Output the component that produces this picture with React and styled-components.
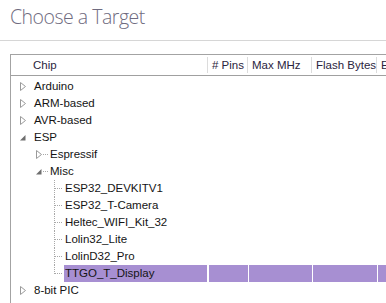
import React from 'react'
import styled, { createGlobalStyle } from 'styled-components'

const GlobalStyle = createGlobalStyle`
  html, body {
    margin: 0;
    padding: 0;
    background: #ffffff;
    overflow: hidden;
  }
`

const columns = [
  { title: 'Chip', width: '197px' },
  { title: '# Pins', width: '40px' },
  { title: 'Max MHz', width: '64px' },
  { title: 'Flash Bytes', width: '65px' },
  { title: 'EEPROM Bytes', width: '90px' },
]

const rows = [
  { name: 'Arduino', level: 0, kind: 'closed' },
  { name: 'ARM-based', level: 0, kind: 'closed' },
  { name: 'AVR-based', level: 0, kind: 'closed' },
  { name: 'ESP', level: 0, kind: 'open' },
  { name: 'Espressif', level: 1, kind: 'closed', line: true },
  { name: 'Misc', level: 1, kind: 'open', line: true },
  { name: 'ESP32_DEVKITV1', level: 2, kind: 'leaf' },
  { name: 'ESP32_T-Camera', level: 2, kind: 'leaf' },
  { name: 'Heltec_WIFI_Kit_32', level: 2, kind: 'leaf' },
  { name: 'Lolin32_Lite', level: 2, kind: 'leaf' },
  { name: 'LolinD32_Pro', level: 2, kind: 'leaf' },
  { name: 'TTGO_T_Display', level: 2, kind: 'leaf', last: true, selected: true },
  { name: '8-bit PIC', level: 0, kind: 'closed' },
  { name: '16-bit PIC', level: 0, kind: 'closed' },
]

const gridCols = columns.map(c => c.width).join(' ')

export default function App() {
  return (
    <Page>
      <GlobalStyle />
      <Title>Choose a Target</Title>
      <Divider />
      <Table>
        <HeaderRow>
          {columns.map((c, i) => (
            <HeaderCell key={c.title} $first={i === 0}>{c.title}</HeaderCell>
          ))}
        </HeaderRow>
        <Body>
          {rows.map(r => (
            <Row key={r.name}>
              <ChipCell>
                <Indent $level={r.level} />
                {r.kind === 'leaf' ? (
                  <LeafLine $last={r.last} />
                ) : (
                  <Toggle>
                    {r.kind === 'open' ? <OpenArrow /> : <ClosedArrow />}
                    {r.line && <Dash />}
                  </Toggle>
                )}
                <Label $selected={r.selected} $leaf={r.kind === 'leaf'}>{r.name}</Label>
              </ChipCell>
              {columns.slice(1).map(c => (
                <DataCell key={c.title} $selected={r.selected} />
              ))}
            </Row>
          ))}
        </Body>
      </Table>
    </Page>
  )
}

function ClosedArrow() {
  return (
    <svg width="6" height="9" viewBox="0 0 6 9">
      <path d="M0.5 0.5 L5.5 4.5 L0.5 8.5 Z" fill="none" stroke="#9a9a9a" strokeWidth="1" />
    </svg>
  )
}

function OpenArrow() {
  return (
    <svg width="6" height="9" viewBox="0 0 6 9">
      <path d="M5.5 2 L5.5 7.5 L0 7.5 Z" fill="#6e6e6e" />
    </svg>
  )
}

const Page = styled.div`
  width: 386px;
  height: 303px;
  overflow: hidden;
  font-family: 'Liberation Sans', Arial, sans-serif;
`

const Title = styled.div`
  height: 40px;
  padding-left: 10px;
  box-sizing: border-box;
  padding-top: 3px;
  font-family: 'Open Sans', 'Liberation Sans', sans-serif;
  font-weight: 300;
  font-size: 19.5px;
  letter-spacing: -0.5px;
  color: #6f6b80;
`

const Divider = styled.div`
  height: 1px;
  background: #d6d6d6;
  margin-bottom: 13px;
`

const Table = styled.div`
  margin-left: 10px;
  border-top: 1px solid #a3a3a3;
  border-left: 1px solid #a3a3a3;
  width: 480px;
`

const HeaderRow = styled.div`
  display: grid;
  grid-template-columns: ${gridCols};
  height: 20px;
  border-bottom: 1px solid #a0a0a0;
  align-items: center;
`

const HeaderCell = styled.div`
  font-size: 11.5px;
  color: #2b2540;
  padding-left: ${p => (p.$first ? '22px' : '4px')};
  border-right: 1px solid #dcdcdc;
  height: 16px;
  line-height: 16px;
  white-space: nowrap;
  overflow: hidden;
`

const Body = styled.div`
  padding-top: 2px;
`

const Row = styled.div`
  display: grid;
  grid-template-columns: ${gridCols};
  height: 17px;
`

const ChipCell = styled.div`
  display: flex;
  align-items: stretch;
  border-right: 1px solid transparent;
`

const Indent = styled.div`
  width: ${p => 5 + p.$level * 16}px;
  flex: none;
`

const Toggle = styled.div`
  width: 17px;
  flex: none;
  display: flex;
  align-items: center;
  padding-left: 4px;
  box-sizing: border-box;
`

const Dash = styled.span`
  width: 5px;
  border-top: 1px dotted #a8a8a8;
  margin-left: 1px;
`

const LeafLine = styled.div`
  width: 9px;
  flex: none;
  margin-left: 6px;
  position: relative;
  border-left: 1px dotted #a8a8a8;
  height: ${p => (p.$last ? '9px' : '17px')};
  &::after {
    content: '';
    position: absolute;
    left: 0;
    top: 8px;
    width: 7px;
    border-top: 1px dotted #a8a8a8;
  }
`

const Label = styled.div`
  flex: ${p => (p.$leaf ? 1 : 'none')};
  font-size: 11.5px;
  line-height: 17px;
  color: #141414;
  padding-left: 1px;
  white-space: nowrap;
  background: ${p => (p.$selected ? '#a78fd2' : 'transparent')};
`

const DataCell = styled.div`
  border-left: 1px solid #fff;
  background: ${p => (p.$selected ? '#a78fd2' : 'transparent')};
`
